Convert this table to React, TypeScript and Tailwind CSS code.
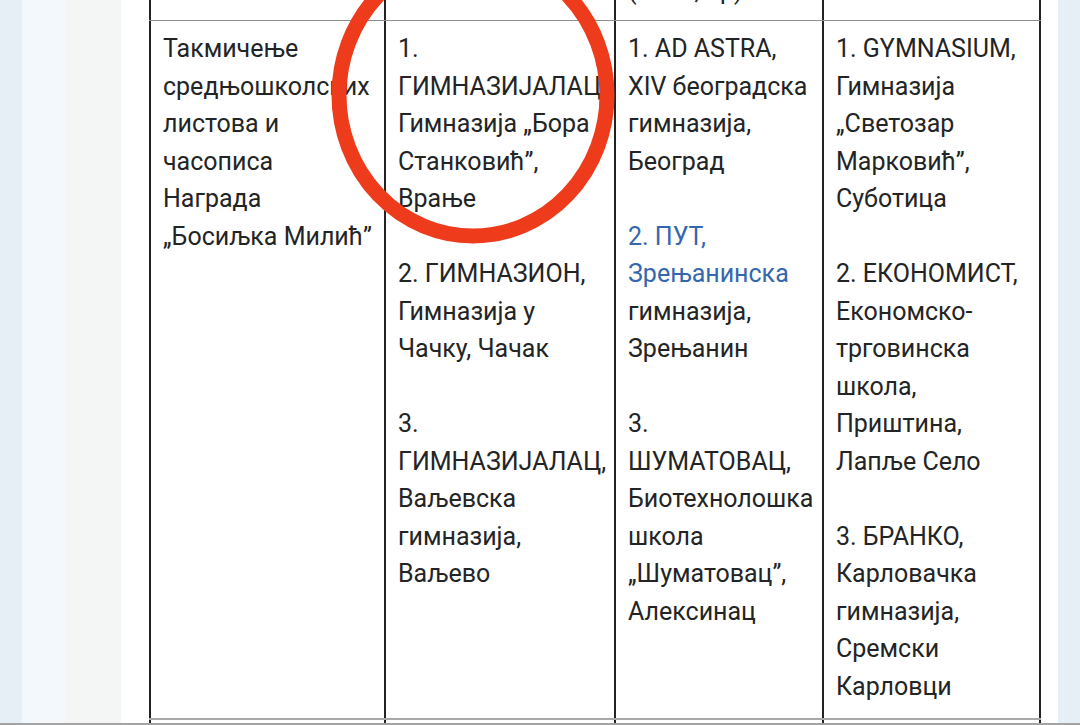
import React from "react";

type Line = string | { t: string; link: true };

const col1: Line[] = [
  "Такмичење",
  "средњошколских",
  "листова и",
  "часописа",
  "Награда",
  "„Босиљка Милић”",
];

const col2: Line[] = [
  "1.",
  "ГИМНАЗИЈАЛАЦ,",
  "Гимназија „Бора",
  "Станковић”,",
  "Врање",
  "",
  "2. ГИМНАЗИОН,",
  "Гимназија у",
  "Чачку, Чачак",
  "",
  "3.",
  "ГИМНАЗИЈАЛАЦ,",
  "Ваљевска",
  "гимназија,",
  "Ваљево",
];

const col3: Line[] = [
  "1. AD ASTRA,",
  "XIV београдска",
  "гимназија,",
  "Београд",
  "",
  { t: "2. ПУТ,", link: true },
  { t: "Зрењанинска", link: true },
  "гимназија,",
  "Зрењанин",
  "",
  "3.",
  "ШУМАТОВАЦ,",
  "Биотехнолошка",
  "школа",
  "„Шуматовац”,",
  "Алексинац",
];

const col4: Line[] = [
  "1. GYMNASIUM,",
  "Гимназија",
  "„Светозар",
  "Марковић”,",
  "Суботица",
  "",
  "2. ЕКОНОМИСТ,",
  "Економско-",
  "трговинска",
  "школа,",
  "Приштина,",
  "Лапље Село",
  "",
  "3. БРАНКО,",
  "Карловачка",
  "гимназија,",
  "Сремски",
  "Карловци",
];

function Cell({ lines, last }: { lines: Line[]; last?: boolean }) {
  return (
    <div
      className={
        "border-l-2 border-[#222] pl-[12px] pt-[9px] pb-[13px] " +
        (last ? "border-r-2" : "")
      }
    >
      {lines.map((l, i) => {
        if (typeof l === "string") {
          return (
            <div key={i} className="h-[37.5px] whitespace-nowrap">
              {l}
            </div>
          );
        }
        return (
          <div key={i} className="h-[37.5px] whitespace-nowrap text-[#3467ad]">
            {l.t}
          </div>
        );
      })}
    </div>
  );
}

export default function App() {
  return (
    <div
      className="relative w-[1080px] h-[725px] overflow-hidden flex flex-col bg-white text-[#232425]"
      style={{ fontFamily: "Roboto, 'Noto Sans', sans-serif" }}
    >
      <div className="flex flex-1 min-h-0">
        <div className="w-[22px] bg-[#e6eef6]" />
        <div className="w-[44px] bg-[#f2f8fc]" />
        <div className="w-[55px] bg-[#f4f6f5]" />
        <div className="flex-1 bg-white pl-[28px] pr-[17px] overflow-hidden">
          <div className="w-[892px] text-[25px] leading-[37.5px]">
            {/* header row (cut off at the top of the view) */}
            <div className="grid grid-cols-[235px_230px_208px_219px] h-[21px] border-b border-[#8d8d8d] overflow-hidden">
              <div className="border-l-2 border-[#222]" />
              <div className="border-l-2 border-[#222]" />
              <div className="border-l-2 border-[#222] pl-[12px] overflow-hidden">
                <div className="-mt-[28px] whitespace-nowrap">(гимн, пр)</div>
              </div>
              <div className="border-l-2 border-r-2 border-[#222]" />
            </div>
            {/* main row */}
            <div className="grid grid-cols-[235px_230px_208px_219px] border-b-2 border-[#a8a8a8]">
              <Cell lines={col1} />
              <Cell lines={col2} />
              <Cell lines={col3} />
              <Cell lines={col4} last />
            </div>
            {/* next row (cut off at the bottom of the view) */}
            <div className="grid grid-cols-[235px_230px_208px_219px] h-[20px]">
              <div className="border-l-2 border-[#222]" />
              <div className="border-l-2 border-[#222]" />
              <div className="border-l-2 border-[#222]" />
              <div className="border-l-2 border-r-2 border-[#222]" />
            </div>
          </div>
        </div>
        <div className="w-[22px] bg-[#e6eef6]" />
      </div>
      <div className="h-[2px] bg-[#a3a3a3]" />

      <svg
        className="absolute inset-0 pointer-events-none"
        width={1080}
        height={725}
        viewBox="0 0 1080 725"
      >
        <ellipse
          cx={473}
          cy={95}
          rx={134}
          ry={141}
          fill="none"
          stroke="#ee3b1c"
          strokeWidth={15}
        />
      </svg>
    </div>
  );
}
